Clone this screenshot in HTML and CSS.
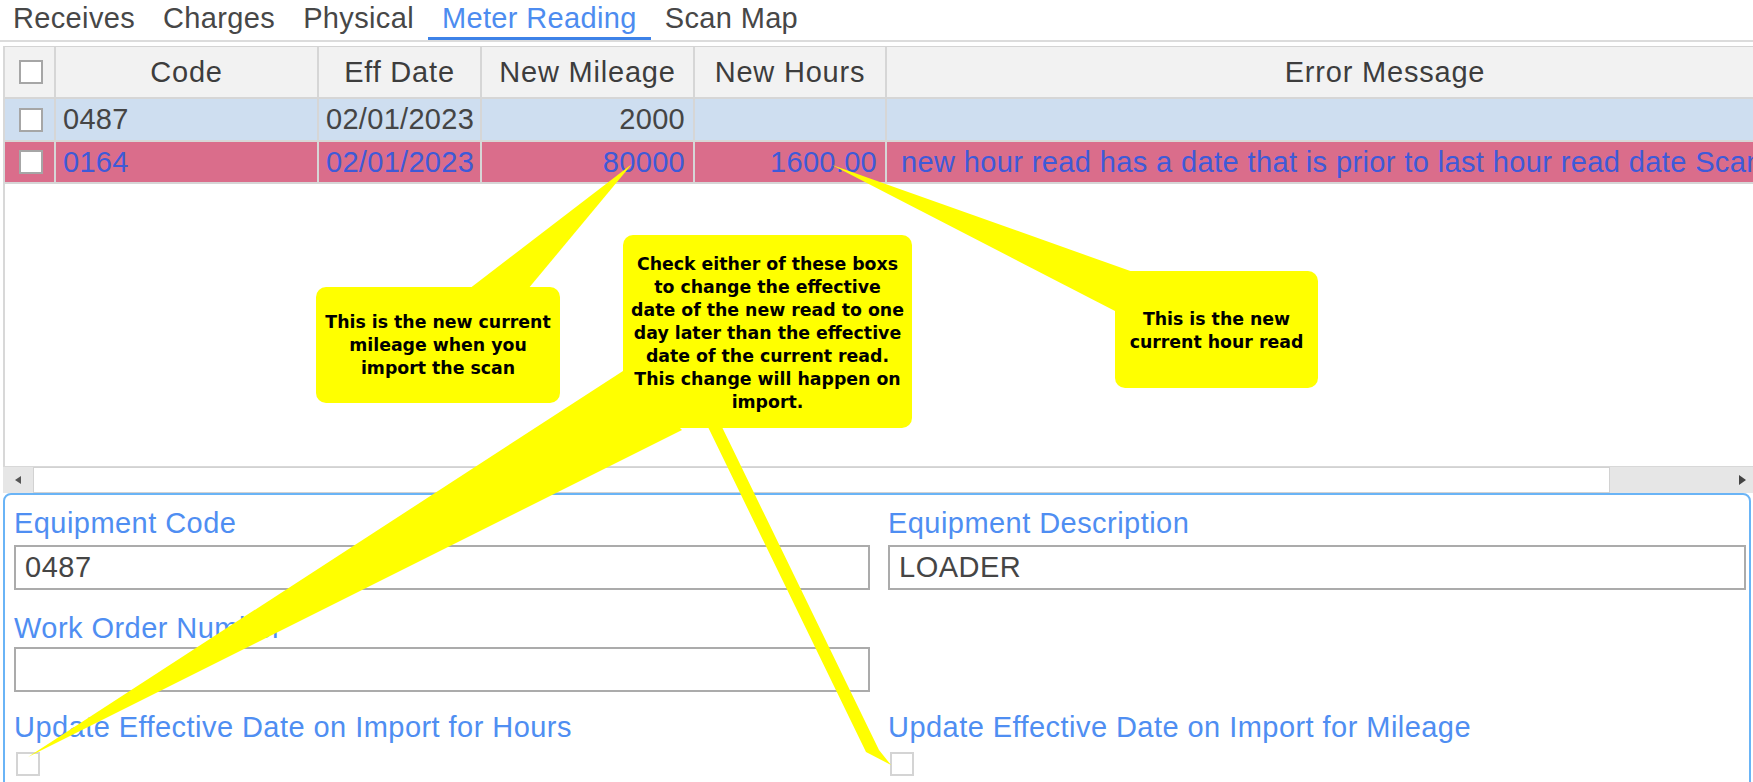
FILE: index.html
```html
<!DOCTYPE html>
<html>
<head>
<meta charset="utf-8">
<title>Meter Reading</title>
<link rel="stylesheet" href="styles.css">
</head>
<body>
<div class="page">
  <nav class="tabs">
    <span class="tab">Receives</span>
    <span class="tab">Charges</span>
    <span class="tab">Physical</span>
    <span class="tab active">Meter Reading</span>
    <span class="tab">Scan Map</span>
  </nav>

  <div class="grid-wrap">
    <div class="grid-view">
      <div class="grid">
        <div class="cell head chk-cell"><span class="chk"></span></div>
        <div class="cell head">Code</div>
        <div class="cell head">Eff Date</div>
        <div class="cell head">New Mileage</div>
        <div class="cell head">New Hours</div>
        <div class="cell head">Error Message</div>

        <div class="cell r1 chk-cell"><span class="chk"></span></div>
        <div class="cell r1">0487</div>
        <div class="cell r1">02/01/2023</div>
        <div class="cell r1 num">2000</div>
        <div class="cell r1 num"></div>
        <div class="cell r1 msg"></div>

        <div class="cell r2 chk-cell"><span class="chk"></span></div>
        <div class="cell r2">0164</div>
        <div class="cell r2">02/01/2023</div>
        <div class="cell r2 num">80000</div>
        <div class="cell r2 num">1600.00</div>
        <div class="cell r2 msg">new hour read has a date that is prior to last hour read date Scan</div>
      </div>
    </div>
    <div class="hscroll">
      <div class="sb-btn left"><span class="tri-left"></span></div>
      <div class="sb-thumb"></div>
      <div class="sb-track"><span class="tri-right"></span></div>
    </div>
  </div>

  <section class="panel">
    <div class="form">
      <div class="field">
        <div class="label">Equipment Code</div>
        <div class="input">0487</div>
      </div>
      <div class="field">
        <div class="label">Equipment Description</div>
        <div class="input">LOADER</div>
      </div>
      <div class="field">
        <div class="label tight">Work Order Number</div>
        <div class="input"></div>
      </div>
      <div class="field"></div>
      <div class="field">
        <div class="label">Update Effective Date on Import for Hours</div>
        <span class="box"></span>
      </div>
      <div class="field">
        <div class="label">Update Effective Date on Import for Mileage</div>
        <span class="box"></span>
      </div>
    </div>
  </section>

  <svg class="pointers" width="1753" height="782" viewBox="0 0 1753 782">
    <polygon points="632,164 469,289 528,289" />
    <polygon points="832,165 1136,273 1115,311" />
    <polygon points="623,371 682,430 28,757" />
    <polygon points="708,427 722,427 879,750 891,765 866,752" />
  </svg>

  <div class="callout c-mileage">This is the new current<br>mileage when you<br>import the scan</div>
  <div class="callout c-check">Check either of these boxs<br>to change the effective<br>date of the new read to one<br>day later than the effective<br>date of the current read.<br>This change will happen on<br>import.</div>
  <div class="callout c-hours">This is the new<br>current hour read</div>
</div>
</body>
</html>
```

FILE: styles.css
```css
html, body {
  margin: 0;
  padding: 0;
  background: #ffffff;
}

body {
  font-family: "Liberation Sans", Arial, sans-serif;
  overflow: hidden;
}

.page {
  position: relative;
  width: 1753px;
  height: 782px;
  overflow: hidden;
}

/* Tabs */
.tabs {
  display: flex;
  height: 40px;
  margin-left: -1px;
  border-bottom: 2px solid #dcdcdc;
}

.tab {
  padding: 0 14px;
  font-size: 29px;
  line-height: 37px;
  height: 37px;
  color: #474747;
  letter-spacing: 0.35px;
  border-bottom: 3px solid transparent;
  white-space: nowrap;
}

.tab.active {
  color: #4d8cf0;
  border-bottom-color: #3d82e8;
}

/* Grid */
.grid-wrap {
  margin: 4px 0 0 3px;
  height: 447px;
  display: flex;
  flex-direction: column;
}

.grid-view {
  flex: 1;
  overflow: hidden;
  border-top: 1px solid #d4d4d4;
  border-left: 2px solid #d8d8d8;
}

.grid {
  display: grid;
  grid-template-columns: 51px 263px 163px 213px 192px 998px;
  grid-template-rows: 52px 43px 42px;
  width: 1880px;
}

.cell {
  box-sizing: border-box;
  border-right: 2px solid #d6d6d6;
  border-bottom: 2px solid #d6d6d6;
  font-size: 29px;
  display: flex;
  align-items: center;
  padding: 0 7px;
  white-space: nowrap;
  overflow: hidden;
  letter-spacing: 0.3px;
}

.cell.head {
  background: #f2f2f2;
  color: #3d3d3d;
  justify-content: center;
  letter-spacing: 0.8px;
}

.cell.r1 {
  background: #cedef0;
  color: #454545;
}

.cell.r2 {
  background: #da6d8b;
  color: #3e5ad8;
}

.cell.num {
  justify-content: flex-end;
  padding-right: 8px;
}

.cell.msg {
  padding-left: 14px;
  letter-spacing: 0.38px;
}

.cell.chk-cell {
  padding: 0 0 0 14px;
  justify-content: flex-start;
}

.chk {
  box-sizing: border-box;
  display: block;
  width: 24px;
  height: 24px;
  background: #ffffff;
  border: 2px solid #a6a6a6;
}

/* Horizontal scrollbar */
.hscroll {
  height: 27px;
  box-sizing: border-box;
  border-top: 1px solid #d8d8d8;
  display: flex;
  background: #e6e6e6;
}

.sb-btn {
  width: 30px;
  display: flex;
  align-items: center;
  justify-content: center;
}

.sb-thumb {
  width: 1577px;
  box-sizing: border-box;
  background: #ffffff;
  border: 1px solid #d2d2d2;
}

.sb-track {
  flex: 1;
  display: flex;
  align-items: center;
  justify-content: flex-end;
  padding-right: 7px;
}

.tri-left {
  width: 0;
  height: 0;
  border-top: 4px solid transparent;
  border-bottom: 4px solid transparent;
  border-right: 6px solid #555555;
}

.tri-right {
  width: 0;
  height: 0;
  border-top: 5px solid transparent;
  border-bottom: 5px solid transparent;
  border-left: 7px solid #444444;
}

/* Detail panel */
.panel {
  margin-left: 3px;
  width: 1748px;
  height: 330px;
  box-sizing: border-box;
  border: 2px solid #6ab4f6;
  border-radius: 8px;
  padding: 10px 3px 0 9px;
}

.form {
  display: grid;
  grid-template-columns: 856px 858px;
  column-gap: 18px;
  row-gap: 17px;
}

.field {
  display: flex;
  flex-direction: column;
  align-items: flex-start;
}

.label {
  font-size: 29px;
  line-height: 36px;
  height: 36px;
  color: #4f8ef2;
  letter-spacing: 0.45px;
  white-space: nowrap;
  margin-bottom: 4px;
}

.label.tight {
  margin-top: 3px;
  margin-bottom: 1px;
}

.input {
  box-sizing: border-box;
  width: 100%;
  height: 45px;
  border: 2px solid #ababab;
  font-size: 29px;
  line-height: 41px;
  padding-left: 9px;
  letter-spacing: 0.5px;
  color: #454545;
}

.box {
  box-sizing: border-box;
  display: block;
  width: 24px;
  height: 24px;
  margin-top: 3px;
  margin-left: 2px;
  border: 2px solid #d4d4d4;
  background: #ffffff;
}

/* Callouts */
.pointers {
  position: absolute;
  left: 0;
  top: 0;
  pointer-events: none;
}

.pointers polygon {
  fill: #ffff00;
}

.callout {
  position: absolute;
  box-sizing: border-box;
  background: #ffff00;
  border-radius: 10px;
  display: flex;
  align-items: center;
  justify-content: center;
  text-align: center;
  font-family: "DejaVu Sans", Verdana, sans-serif;
  font-weight: bold;
  font-size: 17.33px;
  line-height: 23px;
  color: #000000;
  white-space: nowrap;
}

.c-mileage {
  left: 316px;
  top: 287px;
  width: 244px;
  height: 116px;
}

.c-check {
  left: 623px;
  top: 235px;
  width: 289px;
  height: 193px;
  padding-top: 3px;
}

.c-hours {
  left: 1115px;
  top: 271px;
  width: 203px;
  height: 117px;
  padding-top: 3px;
}
```
